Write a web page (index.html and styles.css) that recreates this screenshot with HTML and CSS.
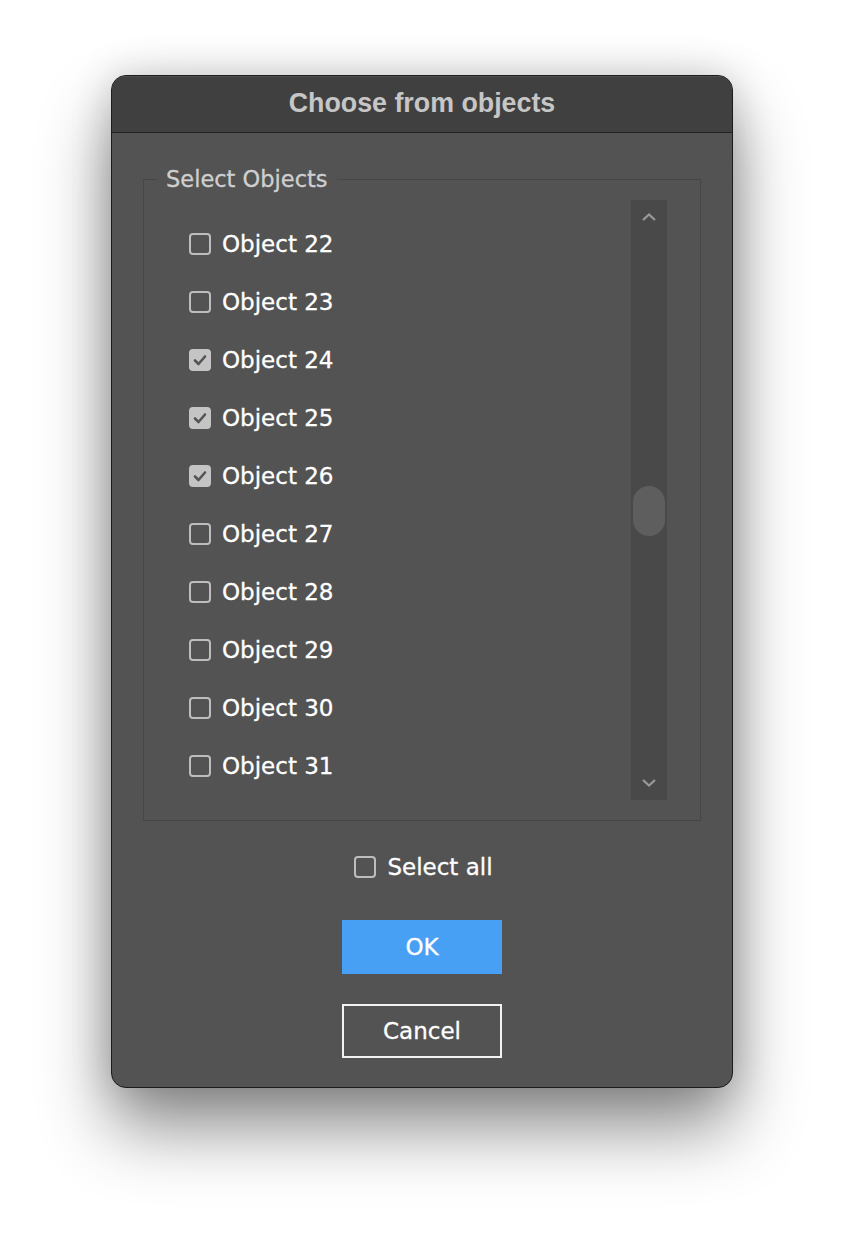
FILE: index.html
```html
<!DOCTYPE html>
<html>
<head>
<meta charset="utf-8">
<link rel="stylesheet" href="styles.css">
</head>
<body>
<div class="window">
  <div class="titlebar">Choose from objects</div>
  <div class="content">
    <fieldset class="group">
      <legend class="legend">Select Objects</legend>
      <div class="group-inner">
        <div class="list">
          <label class="row"><span class="box"></span><span class="lbl">Object 22</span></label>
          <label class="row"><span class="box"></span><span class="lbl">Object 23</span></label>
          <label class="row"><span class="box checked"><svg viewBox="0 0 22 22" width="22" height="22"><path d="M6 11.5 L9.5 15 L16 7.5" fill="none" stroke="#555" stroke-width="2.6" stroke-linecap="round" stroke-linejoin="round"/></svg></span><span class="lbl">Object 24</span></label>
          <label class="row"><span class="box checked"><svg viewBox="0 0 22 22" width="22" height="22"><path d="M6 11.5 L9.5 15 L16 7.5" fill="none" stroke="#555" stroke-width="2.6" stroke-linecap="round" stroke-linejoin="round"/></svg></span><span class="lbl">Object 25</span></label>
          <label class="row"><span class="box checked"><svg viewBox="0 0 22 22" width="22" height="22"><path d="M6 11.5 L9.5 15 L16 7.5" fill="none" stroke="#555" stroke-width="2.6" stroke-linecap="round" stroke-linejoin="round"/></svg></span><span class="lbl">Object 26</span></label>
          <label class="row"><span class="box"></span><span class="lbl">Object 27</span></label>
          <label class="row"><span class="box"></span><span class="lbl">Object 28</span></label>
          <label class="row"><span class="box"></span><span class="lbl">Object 29</span></label>
          <label class="row"><span class="box"></span><span class="lbl">Object 30</span></label>
          <label class="row"><span class="box"></span><span class="lbl">Object 31</span></label>
        </div>
        <div class="scrollbar">
          <svg class="arrow" viewBox="0 0 16 10" width="16" height="10"><path d="M2 8 L8 2.5 L14 8" fill="none" stroke="#9a9a9a" stroke-width="2.2"/></svg>
          <div class="track"><div class="thumb"></div></div>
          <svg class="arrow" viewBox="0 0 16 10" width="16" height="10"><path d="M2 2 L8 7.5 L14 2" fill="none" stroke="#9a9a9a" stroke-width="2.2"/></svg>
        </div>
      </div>
    </fieldset>
    <label class="row selectall"><span class="box"></span><span class="lbl">Select all</span></label>
    <div class="btn ok">OK</div>
    <div class="btn cancel">Cancel</div>
  </div>
</div>
</body>
</html>
```

FILE: styles.css
```css
html, body {
  margin: 0;
  padding: 0;
  background: #ffffff;
}
body {
  padding-top: 75px;
  min-height: 1236px;
  box-sizing: border-box;
  font-family: "DejaVu Sans", sans-serif;
}
.window {
  width: 620px;
  height: 1011px;
  margin: 0 auto;
  border: 1px solid #1c1c1c;
  border-radius: 15px;
  background: #535353;
  overflow: hidden;
  box-shadow: 0 40px 70px rgba(0,0,0,0.45), 0 0 40px rgba(0,0,0,0.18);
  display: flex;
  flex-direction: column;
}
.titlebar {
  height: 54px;
  padding-bottom: 2px;
  flex: none;
  background: #404040;
  border-bottom: 1px solid #222222;
  color: #c6c6c6;
  font-family: "Liberation Sans", Arial, sans-serif;
  font-weight: bold;
  font-size: 26.8px;
  display: flex;
  align-items: center;
  justify-content: center;
  box-shadow: inset 0 1px 0 rgba(255,255,255,0.08);
}
.content {
  flex: 1;
  display: flex;
  flex-direction: column;
  align-items: center;
  padding: 33px 31px 0 31px;
}
.group {
  align-self: stretch;
  margin: 0;
  padding: 0;
  border: 1px solid #464646;
  height: 655px;
  box-sizing: border-box;
}
.legend {
  margin-left: 13px;
  padding: 0 9px;
  color: #cfcfcf;
  font-size: 22.5px;
  line-height: 26px;
  -webkit-text-stroke: 0.3px #cfcfcf;
}
.group-inner {
  display: flex;
  padding-top: 8px;
  padding-right: 33px;
}
.list {
  flex: 1;
  padding-left: 45px;
  padding-top: 15px;
  display: flex;
  flex-direction: column;
}
.row {
  display: flex;
  align-items: center;
  height: 58px;
  color: #ffffff;
  font-size: 23px;
}
.lbl {
  -webkit-text-stroke: 0.3px #ffffff;
}
.box {
  width: 22px;
  height: 22px;
  box-sizing: border-box;
  border: 2px solid #bdbdbd;
  border-radius: 4px;
  margin-right: 11px;
  flex: none;
  display: flex;
  align-items: center;
  justify-content: center;
}
.box.checked {
  background: #c4c4c4;
  border-color: #c4c4c4;
}
.box.checked svg {
  flex: none;
}
.scrollbar {
  width: 36px;
  height: 600px;
  background: #494949;
  display: flex;
  flex-direction: column;
  align-items: center;
  padding: 12px 0;
  box-sizing: border-box;
}
.track {
  flex: 1;
  align-self: stretch;
  position: relative;
}
.thumb {
  position: absolute;
  left: 2px;
  right: 2px;
  top: 264px;
  height: 50px;
  border-radius: 16px;
  background: #5e5e5e;
}
.selectall {
  margin-top: 22px;
  height: 48px;
  padding-left: 3px;
}
.btn {
  width: 160px;
  height: 54px;
  box-sizing: border-box;
  display: flex;
  align-items: center;
  justify-content: center;
  color: #ffffff;
  font-size: 23px;
  -webkit-text-stroke: 0.3px #ffffff;
}
.ok {
  margin-top: 29px;
  background: #47a0f4;
}
.cancel {
  margin-top: 30px;
  border: 2px solid #f2f2f2;
}
```
